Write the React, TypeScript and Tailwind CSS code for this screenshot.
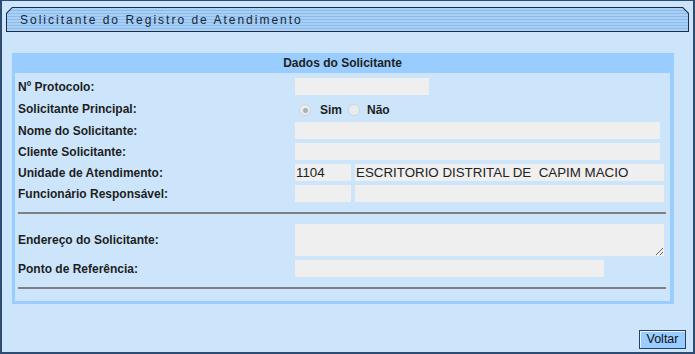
import React from "react";

const labelCls = "w-[277px] shrink-0 text-[12px] font-bold text-[#1e1e1e] leading-none";
const inputCls =
  "h-[17px] bg-[#efefef] border-0 outline-none px-px text-[13.33px] text-[#222] font-['Liberation_Sans',Arial,sans-serif] whitespace-pre";

function Radio({ checked }: { checked?: boolean }) {
  return (
    <span className="w-[12px] h-[12px] rounded-full border border-[#cfd6dd] bg-[#e8ecef] flex items-center justify-center shrink-0">
      {checked && <span className="w-[5px] h-[5px] rounded-full bg-[#a9b0b6]" />}
    </span>
  );
}

function Row({ label, children, className = "" }: { label: string; children: React.ReactNode; className?: string }) {
  return (
    <div className={"flex items-center " + className}>
      <div className={labelCls}>{label}</div>
      <div className="flex items-center">{children}</div>
    </div>
  );
}

export default function App() {
  return (
    <div className="w-[695px] h-[354px] bg-[#cce5fb] border-x-2 border-b-2 border-t border-[#2e4c72] flex flex-col font-['Liberation_Sans',Arial,sans-serif]">
      {/* Title tab */}
      <div className="mt-[6px] mx-[4px] h-[25px] bg-[#1c2c44] p-px [clip-path:polygon(6px_0,calc(100%_-_6px)_0,100%_6px,100%_100%,0_100%,0_6px)]">
        <div className="h-full flex items-center pl-[13px] pt-px bg-[repeating-linear-gradient(to_bottom,#a9d0f6_0px,#a9d0f6_2px,#8cbbea_2px,#8cbbea_3px)] [clip-path:polygon(5.5px_0,calc(100%_-_5.5px)_0,100%_5.5px,100%_100%,0_100%,0_5.5px)]">
          <span className="text-[12px] tracking-[2px] text-[#18273a] leading-none">
            Solicitante do Registro de Atendimento
          </span>
        </div>
      </div>

      {/* Panel */}
      <div className="mt-[21px] ml-[10px] w-[662px] bg-[#99ccff] pl-[3px] pr-[4px] pb-[3px]">
        <div className="h-[20px] flex items-center justify-center text-[12px] font-bold text-[#1e1e1e]">
          Dados do Solicitante
        </div>
        <div className="bg-[#cce5fb] pl-[3px] pr-[4px] pt-[5px] pb-[12px] flex flex-col">
          <Row label="Nº Protocolo:">
            <input readOnly className={inputCls + " w-[134px]"} />
          </Row>
          <Row label="Solicitante Principal:" className="mt-[4px] h-[19px]">
            <div className="flex items-center pt-[3px] pl-[4px] text-[12px] font-bold text-[#1e1e1e]">
              <Radio checked />
              <span className="ml-[9px]">Sim</span>
              <span className="ml-[6px]"><Radio /></span>
              <span className="ml-[7px]">Não</span>
            </div>
          </Row>
          <Row label="Nome do Solicitante:" className="mt-[4px]">
            <input readOnly className={inputCls + " w-[365px]"} />
          </Row>
          <Row label="Cliente Solicitante:" className="mt-[4px]">
            <input readOnly className={inputCls + " w-[365px]"} />
          </Row>
          <Row label="Unidade de Atendimento:" className="mt-[4px]">
            <input readOnly value="1104" className={inputCls + " w-[56px]"} />
            <input
              readOnly
              value="ESCRITORIO DISTRITAL DE  CAPIM MACIO"
              className={inputCls + " w-[309px] ml-[4px]"}
            />
          </Row>
          <Row label="Funcionário Responsável:" className="mt-[4px]">
            <input readOnly className={inputCls + " w-[56px]"} />
            <input readOnly className={inputCls + " w-[309px] ml-[4px]"} />
          </Row>
          <div className="mt-[10px] h-[2px] bg-[#808080]" />
          <Row label="Endereço do Solicitante:" className="mt-[10px]">
            <textarea
              readOnly
              className="w-[369px] h-[32px] bg-[#efefef] border-0 outline-none resize block"
            />
          </Row>
          <Row label="Ponto de Referência:" className="mt-[4px]">
            <input readOnly className={inputCls + " w-[309px]"} />
          </Row>
          <div className="mt-[10px] h-[2px] bg-[#808080]" />
        </div>
      </div>

      <div className="flex-1" />
      <div className="flex justify-end mr-[7px] mb-[3px]">
        <button className="w-[47px] h-[19px] bg-[#99ccff] border border-[#2b3f5c] shadow-[inset_1px_1px_0_#e6f2ff] text-[12.5px] text-[#111] leading-none flex items-center justify-center">
          Voltar
        </button>
      </div>
    </div>
  );
}
